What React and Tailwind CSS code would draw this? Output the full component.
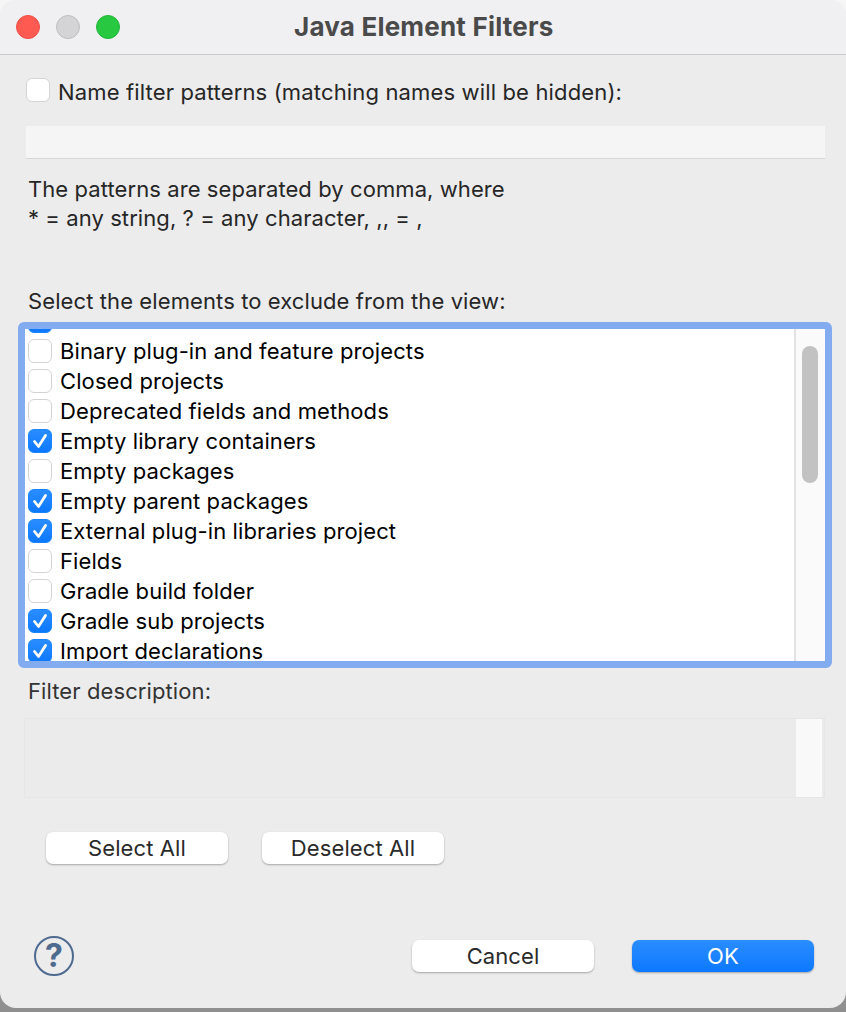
import React from 'react';

const rows = [
  { label: 'Binary plug-in and feature projects', checked: false },
  { label: 'Closed projects', checked: false },
  { label: 'Deprecated fields and methods', checked: false },
  { label: 'Empty library containers', checked: true },
  { label: 'Empty packages', checked: false },
  { label: 'Empty parent packages', checked: true },
  { label: 'External plug-in libraries project', checked: true },
  { label: 'Fields', checked: false },
  { label: 'Gradle build folder', checked: false },
  { label: 'Gradle sub projects', checked: true },
  { label: 'Import declarations', checked: true },
];

const CheckBox = ({ checked }) => (
  <span
    className={`flex h-6 w-6 shrink-0 items-center justify-center rounded-[6px] border ${
      checked ? 'border-[#1a84ff] bg-gradient-to-b from-[#2a8dff] to-[#0a78ff]' : 'border-[#d4d4d4] bg-white'
    }`}
  >
    {checked && (
      <svg width="18" height="18" viewBox="0 0 18 18" fill="none">
        <path d="M3.5 9.5 L7.5 14.5 L14.5 3.5" stroke="white" strokeWidth="2.8" strokeLinecap="round" strokeLinejoin="round" />
      </svg>
    )}
  </span>
);

const PushButton = ({ children, primary }) => (
  <button
    className={`h-8 w-[182px] rounded-[7px] text-[22px] leading-8 shadow-[0_1px_2px_rgba(0,0,0,0.3)] ${
      primary ? 'bg-gradient-to-b from-[#2a8dff] to-[#0a78ff] text-white' : 'bg-white text-[#2a2a2a]'
    }`}
  >
    {children}
  </button>
);

export default function App() {
  return (
    <div className="h-[1012px] w-[846px] overflow-hidden bg-gradient-to-b from-[#f6f6f6] via-[#e0e0e0] to-[#8f8f8f] font-['Inter','Noto_Sans',sans-serif]">
      <div className="flex h-[1008px] w-[846px] flex-col rounded-[16px] bg-[#ececec] text-[22px] tracking-[0.1px] text-[#262626]">
        <div className="flex h-[55px] shrink-0 items-center rounded-t-[16px] border-b border-[#c9c9c9] bg-[#f0f0f2] pl-4">
          <div className="flex gap-4">
            <span className="h-6 w-6 rounded-full border border-[#ee4e46] bg-[#ff5a52]"></span>
            <span className="h-6 w-6 rounded-full border border-[#bfbfbf] bg-[#d4d4d6]"></span>
            <span className="h-6 w-6 rounded-full border border-[#22b63c] bg-[#28c840]"></span>
          </div>
          <div className="ml-[174px] text-[26px] leading-none font-bold tracking-[0.2px] text-[#4a4a4a]">Java Element Filters</div>
        </div>

        <div className="mt-[23px] flex h-6 items-center pl-[26px]">
          <CheckBox checked={false} />
          <span className="mt-1 ml-2 leading-6 tracking-[0.15px]">Name filter patterns (matching names will be hidden):</span>
        </div>

        <div className="mt-6 ml-[26px] h-[33px] w-[799px] border-b border-[#d6d6d6] bg-[#f5f5f5]"></div>

        <div className="mt-4 ml-7 leading-[29px] tracking-[0.08px]">
          <div>The patterns are separated by comma, where</div>
          <div>* = any string, ? = any character, ,, = ,</div>
        </div>

        <div className="mt-[54px] ml-7 leading-[29px]">Select the elements to exclude from the view:</div>

        <div className="mt-[6px] ml-[18px] flex h-[346px] w-[814px] overflow-hidden rounded-[6px] border-[7px] border-[#82abf0] bg-white">
          <div className="min-w-0 flex-1 overflow-hidden text-black">
            <div className="-mt-[23px] flex h-[30px] items-center pl-[3px]">
              <CheckBox checked />
            </div>
            {rows.map((row) => (
              <div key={row.label} className="flex h-[30px] items-center pl-[3px]">
                <CheckBox checked={row.checked} />
                <span className="ml-2 whitespace-nowrap">{row.label}</span>
              </div>
            ))}
          </div>
          <div className="w-[31px] shrink-0 border-l-2 border-[#e2e2e2] bg-[#fafafa] pt-[17px] pl-[6px]">
            <div className="h-[137px] w-4 rounded-full bg-[#c2c2c2]"></div>
          </div>
        </div>

        <div className="mt-[9px] ml-7 leading-[29px] text-[#333333]">Filter description:</div>

        <div className="mt-[12px] ml-6 flex h-[80px] w-[801px] justify-end border border-[#e6e6e6] bg-[#ebebeb]">
          <div className="mr-[2px] w-[26px] bg-[#f9f9f9]"></div>
        </div>

        <div className="mt-[34px] ml-[46px] flex gap-[34px]">
          <PushButton>Select All</PushButton>
          <PushButton>Deselect All</PushButton>
        </div>

        <div className="mt-[72px] flex items-center pr-8 pl-[34px]">
          <span className="flex h-10 w-10 items-center justify-center rounded-full border-2 border-[#4f6a8f] text-[32px] leading-none font-bold text-[#4f6a8f]">?</span>
          <div className="ml-auto flex gap-[38px]">
            <PushButton>Cancel</PushButton>
            <PushButton primary>OK</PushButton>
          </div>
        </div>
      </div>
    </div>
  );
}
